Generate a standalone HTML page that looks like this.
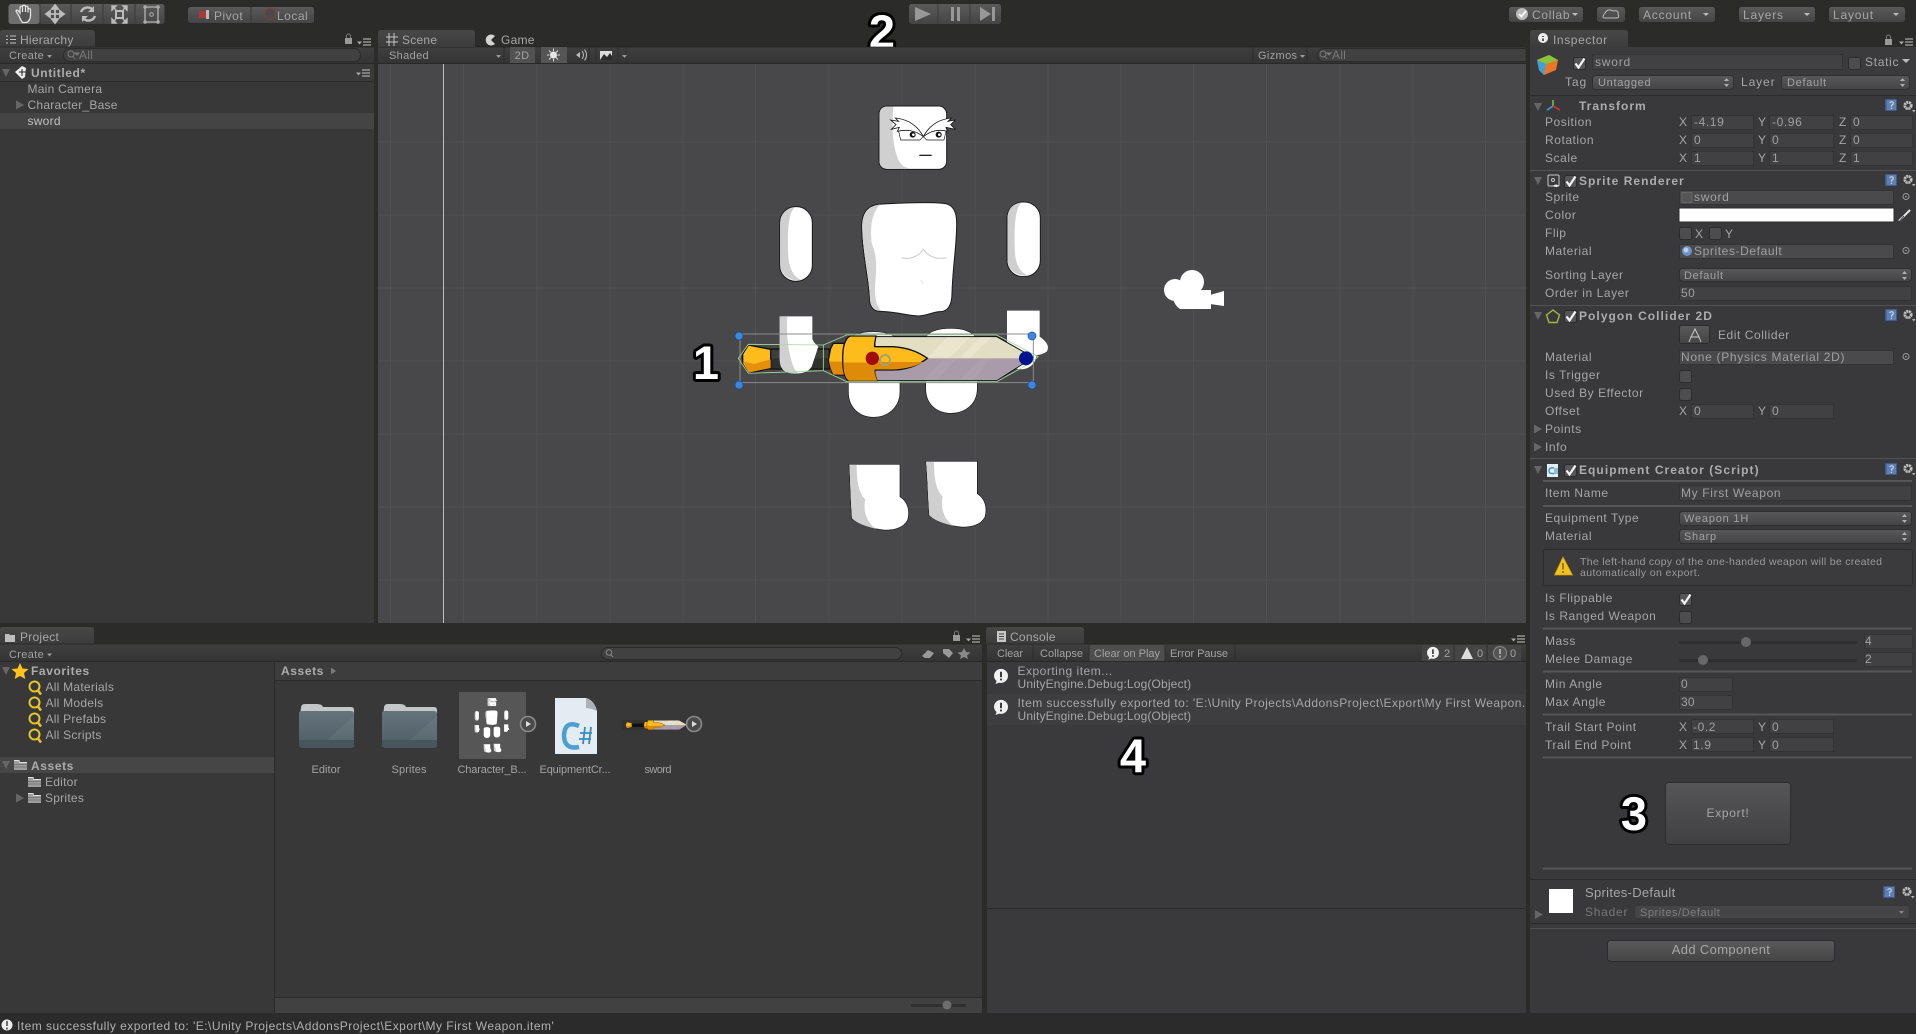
<!DOCTYPE html>
<html><head><meta charset="utf-8"><title>Unity Editor</title>
<style>
html,body{margin:0;padding:0;background:#2b2c2a;overflow:hidden;width:1916px;height:1034px}
svg{display:block;filter:blur(.35px)}
text{font-family:"Liberation Sans",sans-serif;font-size:12px;fill:#a6a6a6;letter-spacing:.25px;white-space:pre}
.b{font-weight:bold;letter-spacing:.6px;fill:#acacac}
.s{font-size:11px;letter-spacing:.35px;fill:#a2a2a2}
.v{font-size:12px;fill:#a0a0a0}
.l{fill:#c0c0c0}
.d{fill:#787878}
.n{font-size:47px;font-weight:bold;fill:#fff;stroke:#000;stroke-width:6px;paint-order:stroke;stroke-linejoin:round;letter-spacing:0;text-anchor:middle}
.m{text-anchor:middle}
.fld{fill:#414143;stroke:#333335;stroke-width:1}
.dd{fill:url(#gd);stroke:#2f2f2f;stroke-width:1}
</style></head><body>
<svg width="1916" height="1034" viewBox="0 0 1916 1034" xmlns="http://www.w3.org/2000/svg">
<defs>
<linearGradient id="gd" x1="0" y1="0" x2="0" y2="1"><stop offset="0" stop-color="#58585a"/><stop offset="1" stop-color="#444446"/></linearGradient>
<linearGradient id="gb" x1="0" y1="0" x2="0" y2="1"><stop offset="0" stop-color="#5a5a5a"/><stop offset="1" stop-color="#444"/></linearGradient>
<linearGradient id="gt" x1="0" y1="0" x2="0" y2="1"><stop offset="0" stop-color="#3f3f3f"/><stop offset="1" stop-color="#343434"/></linearGradient>
<linearGradient id="gtab" x1="0" y1="0" x2="0" y2="1"><stop offset="0" stop-color="#474747"/><stop offset="1" stop-color="#3c3c3c"/></linearGradient>
<linearGradient id="gf" x1="0" y1="0" x2="0" y2="1"><stop offset="0" stop-color="#65747c"/><stop offset="1" stop-color="#4e5d65"/></linearGradient>
<linearGradient id="gexp" x1="0" y1="0" x2="0" y2="1"><stop offset="0" stop-color="#565658"/><stop offset="1" stop-color="#404042"/></linearGradient>
<g id="cb"><rect x=".5" y=".5" width="12" height="12" rx="2" fill="#4d4d4f" stroke="#2c2c2c"/></g>
<g id="ck"><rect x=".5" y=".5" width="12" height="12" rx="2" fill="#555557" stroke="#2c2c2c"/><path d="M2.5 6.5 L5.5 10.5 L11.5 1.5" fill="none" stroke="#f4f4f4" stroke-width="2.2"/></g>
<g id="help"><rect x="0" y="0" width="12" height="12" fill="#4f6a98" stroke="#2e3a55" stroke-width=".6"/><rect x="2" y="1" width="9" height="10" fill="#5f7fb2"/><path d="M4.6 4 Q6.5 1.6 8.2 3.6 Q8.6 5.4 6.5 6.3 V7.6 M6.5 8.6 V10" fill="none" stroke="#c6d2e4" stroke-width="1.2"/></g>
<g id="gear"><circle cx="6" cy="5.5" r="3.2" fill="none" stroke="#c0c0c0" stroke-width="2.8" stroke-dasharray="2 .6"/><circle cx="6" cy="5.5" r="1.6" fill="#393939"/><path d="M10 10 H13.5 L11.8 12.5Z" fill="#b4b4b4"/></g>
<g id="ud"><path d="M0 3 L2.5 0 L5 3Z M0 6 L2.5 9 L5 6Z" fill="#b0b0b0"/></g>
<g id="menu"><path d="M0 3.5 H5 L2.5 6.5Z" fill="#a8a8a8"/><path d="M6 1 H14 M6 4 H14 M6 7 H14" stroke="#a8a8a8" stroke-width="1.2"/></g>
<g id="tri"><path d="M0 0 H8 L4 8Z" fill="#666"/></g>
<g id="trr"><path d="M0 0 L8 4.5 L0 9Z" fill="#666"/></g>
<g id="tgt"><circle cx="0" cy="0" r="3" fill="none" stroke="#999" stroke-width="1"/><circle cx="0" cy="0" r=".9" fill="#999"/></g>
<g id="info"><path d="M0 7 a7 7 0 1 1 5 6.6 L1.5 15 L2.6 12 A7 7 0 0 1 0 7Z" fill="#f2f2f2"/><path d="M7 2.8 V8.2 M7 9.6 V11.4" stroke="#333" stroke-width="1.9"/></g>
<g id="mag"><circle cx="6.5" cy="6.5" r="5" fill="none" stroke="#e8c52a" stroke-width="2"/><path d="M10 10.5 L13 14.5" stroke="#e8c52a" stroke-width="2.5"/></g>
<g id="fol"><path d="M0 3 H5 L6 1 H0Z M0 3 H13 V11 H0Z" fill="#9e9e9e"/><path d="M0 2 H5 V4 H13 V3 H6 L5 1 H0Z" fill="#ddd"/><path d="M0 5.5 H13 M0 8 H13" stroke="#6b6b6b" stroke-width=".7"/></g>
<g id="folder"><path d="M2 4 Q2 0 6 0 H18 Q23 0 24 3 L52 3 Q55 3 55 6 V11 H1Z" fill="#c4c7c8"/><path d="M0 9 Q0 7 3 7 H52 Q55 7 55 10 V41 Q55 44 51 44 H4 Q0 44 0 40Z" fill="url(#gf)"/><path d="M0 36 V40 Q0 44 4 44 H51 Q55 44 55 41 V36 Z" fill="#47555d"/><path d="M28 36 L55 12 V36Z" fill="#fff" opacity=".05"/></g>
<g id="playc"><circle cx="0" cy="0" r="7.5" fill="#4a4a4a" stroke="#8a8a8a" stroke-width="1.6"/><path d="M-2 -3 L3 0 L-2 3Z" fill="#ddd"/></g>

<g id="handle"><rect x="270" y="807" width="178" height="60" fill="#3c3f3a" stroke="#111" stroke-width="4"/><rect x="272" y="835" width="175" height="30" fill="#2f312e"/></g>
<g id="front">
<path d="M205 795 L272 808 V865 L205 880 L188 852 V822Z" fill="#fdbb1c" stroke="#111" stroke-width="4"/>
<path d="M190 845 L222 852 L272 838 V864 L205 878Z" fill="#e48f0e"/>
<path d="M452 805 L460 790 H492 V885 H460 L452 865 L445 840Z" fill="#fdbb1c" stroke="#111" stroke-width="4"/>
<path d="M447 845 H492 V884 H460 L452 865Z" fill="#e08a0a"/>
<path d="M585 770 H950 L1060 832 L950 902 H585Z" fill="#e2dec4" stroke="#111" stroke-width="3"/>
<path d="M587 835 H1052 L950 900 H587Z" fill="#a99ba9"/>
<path d="M800 772 H870 L810 833 H745Z M900 772 H935 L870 833 H840Z" fill="#e9e6cd"/>
<path d="M730 900 L790 837 H830 L770 900Z M840 900 L900 837 H930 L880 900Z" fill="#ae9fae"/>
<path d="M510 768 H588 Q582 800 584 800 H640 Q700 804 742 835 Q700 868 640 870 H584 Q582 880 592 904 H506 Q488 890 488 835 Q488 780 510 768Z" fill="#fdbb1c" stroke="#111" stroke-width="4"/>
<path d="M490 848 H584 V870 Q582 880 592 902 H506 Q490 890 490 848Z M584 846 H730 Q695 866 640 868 H584Z" fill="#e08a0a"/>
</g>
<g id="char" stroke="#1a1a1a" stroke-width="3">
<rect x="597" y="78" width="203" height="190" rx="24" fill="#fff"/>
<path d="M622 80 H640 C636 120 636 190 650 225 C656 250 670 262 690 266 H622 Q599 266 599 243 V103 Q599 80 622 80Z" fill="#d0d0d0" stroke="none"/>
<path d="M632 120 L656 124 L646 114 C685 118 712 136 730 170 C705 150 680 148 652 154 L658 142 L634 148 L648 134Z" fill="#fff" stroke-width="2.5"/>
<path d="M826 120 L804 124 L814 114 C775 118 748 136 730 170 C755 150 780 148 802 154 L798 142 L826 148 L812 134Z" fill="#fff" stroke-width="2.5"/>
<path d="M656 154 L662 180 H720 L730 170 L740 180 H792 L798 154" fill="none" stroke-width="2"/>
<circle cx="698" cy="164" r="9" fill="#111" stroke="none"/><circle cx="776" cy="164" r="9" fill="#111" stroke="none"/>
<circle cx="700" cy="164" r="4" fill="#fff" stroke="none"/><circle cx="778" cy="164" r="4" fill="#fff" stroke="none"/>
<path d="M718 226 H755" stroke="#222" stroke-width="4"/>
<path d="M545 440 C545 390 570 372 610 372 C680 368 750 366 790 370 C820 372 830 395 830 430 C830 500 818 560 816 640 C816 680 800 695 780 695 C760 695 740 708 715 708 C680 706 640 694 600 694 C580 694 568 680 568 650 C565 590 545 510 545 440Z" fill="#fff"/>
<path d="M547 440 C547 402 565 378 600 374 C575 400 570 440 575 490 C592 530 590 560 585 620 C585 660 590 685 606 692 H600 C582 692 570 680 570 650 C567 590 547 510 547 440Z" fill="#d2d2d2" stroke="none"/>
<path d="M665 533 C690 540 715 530 730 508 C745 530 770 540 800 533" fill="none" stroke="#ccc" stroke-width="3"/>
<path d="M722 600 L730 612" stroke="#ccc" stroke-width="2"/>
<rect x="299" y="380" width="98" height="224" rx="48" fill="#fff"/>
<path d="M345 382 C322 395 322 480 325 530 C328 570 345 595 365 600 C340 606 301 590 301 555 V430 C301 400 320 384 345 382Z" fill="#cfcfcf" stroke="none"/>
<rect x="981" y="366" width="100" height="224" rx="48" fill="#fff"/>
<path d="M1025 368 C1000 385 1003 480 1005 520 C1008 560 1025 580 1045 586 C1020 592 983 575 983 540 V415 C983 385 1000 370 1025 368Z" fill="#cfcfcf" stroke="none"/>
<path d="M299 709 H397 V775 C400 790 412 795 415 800 L395 860 C385 880 350 884 325 878 C300 870 299 850 299 830Z" fill="#fff" stroke="none"/>
<path d="M300 709 H322 C318 760 325 830 345 870 L355 880 C340 882 330 880 325 878 C300 870 300 850 300 830Z" fill="#d0d0d0" stroke="none"/>
<path d="M981 692 H1079 V770 C1100 785 1110 800 1100 815 C1085 825 1075 825 1070 825 C1065 860 1040 868 1020 868 L981 860Z" fill="#fff" stroke="none"/>
<path id="th" d="M505 790 C505 765 540 755 582 755 C625 755 660 770 660 800 V935 C660 985 620 1012 582 1012 C540 1012 505 985 505 935Z" fill="#fff" stroke-width="2"/>
<path d="M737 780 C737 755 772 745 814 745 C857 745 892 760 892 790 V925 C892 975 852 1000 814 1000 C772 1000 737 975 737 925Z" fill="#fff" stroke-width="2"/>
<path d="M507 1153 H660 V1250 C685 1265 690 1295 683 1320 C670 1345 640 1352 610 1350 C570 1345 530 1330 515 1315 C510 1250 510 1200 507 1153Z" fill="#fff" stroke-width="2"/>
<path d="M508 1154 H530 C530 1200 535 1240 556 1258 C548 1290 560 1330 590 1347 C560 1340 530 1330 516 1315 C511 1250 511 1200 508 1154Z" fill="#cfcfcf" stroke="none"/>
<path d="M737 1144 H892 V1241 C917 1256 922 1286 915 1311 C902 1336 872 1343 842 1341 C802 1336 762 1321 747 1306 C742 1241 742 1191 737 1144Z" fill="#fff" stroke-width="2"/>
<path d="M738 1145 H762 C762 1191 767 1231 788 1249 C780 1281 792 1321 822 1338 C792 1331 762 1321 748 1306 C743 1241 743 1191 738 1145Z" fill="#cfcfcf" stroke="none"/>
</g>
</defs>

<!-- background -->
<rect width="1916" height="1034" fill="#2b2c2a"/>

<!-- top toolbar: tools -->
<rect x="8" y="3.5" width="157" height="21" rx="3" fill="url(#gb)" stroke="#2a2a2a"/>
<rect x="8.500" y="4" width="31" height="20" rx="3" fill="#6e6e6e"/>
<path d="M40 4 V24 M71 4 V24 M103 4 V24 M135 4 V24" stroke="#383838"/>
<path d="M19 16 L16 11 Q16.5 9.5 18 10.5 L20 13 V7 Q21.5 5.5 22.5 7 V12 V6 Q24 4.5 25.5 6 V12 V7 Q27 5.5 28 7 V12.5 V9 Q29.5 8 30.5 9.5 V16 Q30 21 26.5 22.5 H22.5 Q20.5 20 19 16Z" fill="#555" stroke="#e4e4e4" stroke-width="1.300"/>
<path d="M55 6 V22 M47 14 H63 M55 5 L52 9 H58Z M55 23 L52 19 H58Z M46 14 L50 11 V17Z M64 14 L60 11 V17Z" fill="#bcbcbc" stroke="#bcbcbc" stroke-width="1.800"/>
<path d="M81 12 A7 7 0 0 1 93 10 M95 16 A7 7 0 0 1 83 18" fill="none" stroke="#bcbcbc" stroke-width="2.400"/><path d="M94 6 V12 H88Z M82 22 V16 H88Z" fill="#bcbcbc"/>
<rect x="116" y="11" width="7" height="7" fill="none" stroke="#bcbcbc" stroke-width="2"/><path d="M112 10 V6 H116 Z M127 10 V6 H123Z M112 19 V23 H116Z M127 19 V23 H123Z M112 6 L116 10 M127 6 L123 10 M112 23 L116 19 M127 23 L123 19" fill="#bcbcbc" stroke="#bcbcbc" stroke-width="1.400"/>
<rect x="145" y="7" width="13" height="15" fill="none" stroke="#acacac" stroke-width="1.400"/><circle cx="151.500" cy="14.500" r="1.800" fill="none" stroke="#acacac"/><path d="M145 7h.1M158 7h.1M145 22h.1M158 22h.1" stroke="#acacac" stroke-width="3.400" stroke-linecap="round"/>
<!-- pivot local -->
<rect x="187.500" y="6.500" width="127" height="17" rx="3" fill="url(#gb)" stroke="#2a2a2a"/>
<path d="M251 7 V23" stroke="#383838"/>
<rect x="199" y="11" width="7" height="7" fill="#a83a3a"/><rect x="206" y="10" width="3" height="9" fill="#bcbcbc"/>
<path d="M265 10 L270 8 L275 10 V17 L270 20 L265 17Z" fill="#4a4a4a" stroke="#8a3a3a" stroke-width="1"/>
<text x="214" y="20" style="font-size:12px;letter-spacing:.5px">Pivot</text>
<text x="277" y="20" style="font-size:12px;letter-spacing:.5px">Local</text>
<!-- play -->
<rect x="908.500" y="3.500" width="93" height="21" rx="3" fill="url(#gb)" stroke="#2a2a2a"/>
<path d="M938 4 V24 M970 4 V24" stroke="#3a3a3a"/>
<path d="M915 7 L931 14 L915 21Z M951 7 H954 V21 H951Z M957 7 H960 V21 H957Z M980 7 L991 14 L980 21Z M992 7 H995 V21 H992Z" fill="#989898"/>
<text class="n" x="882" y="48">2</text>
<!-- right buttons -->
<rect x="1508.500" y="6.500" width="75" height="16" rx="3" fill="url(#gb)" stroke="#2a2a2a"/>
<circle cx="1522" cy="14" r="6" fill="#bbb"/><path d="M1519 14 L1521.500 16.500 L1526 11" fill="none" stroke="#fff" stroke-width="1.800"/>
<text x="1532" y="19" style="letter-spacing:.7px">Collab</text><path d="M1572 13 H1578 L1575 16Z" fill="#bbb"/>
<rect x="1596.500" y="6.500" width="29" height="16" rx="3" fill="url(#gb)" stroke="#2a2a2a"/>
<path d="M1605 18 Q1601 18 1605 13 Q1608 8 1613 11 Q1619 10 1618 14 Q1620 18 1616 18Z" fill="none" stroke="#bbb"/>
<rect x="1638.500" y="6.500" width="77" height="16" rx="3" fill="url(#gb)" stroke="#2a2a2a"/>
<text x="1643" y="19" style="letter-spacing:.8px">Account</text><path d="M1703 13 H1709 L1706 16Z" fill="#bbb"/>
<rect x="1738.500" y="6.500" width="77" height="16" rx="3" fill="url(#gb)" stroke="#2a2a2a"/>
<text x="1743" y="19" style="letter-spacing:.8px">Layers</text><path d="M1804 13 H1810 L1807 16Z" fill="#bbb"/>
<rect x="1828.500" y="6.500" width="77" height="16" rx="3" fill="url(#gb)" stroke="#2a2a2a"/>
<text x="1833" y="19" style="letter-spacing:.8px">Layout</text><path d="M1893 13 H1899 L1896 16Z" fill="#bbb"/>

<!-- HIERARCHY -->
<path d="M0 47 V33 Q0 30 3 30 H92 Q95 30 95 33 V47Z" fill="url(#gtab)"/>
<path d="M6 36 H8 M6 39.500 H8 M6 43 H8 M10 36 H16 M10 39.500 H16 M10 43 H16" stroke="#c0c0c0"/>
<text x="20" y="44">Hierarchy</text>
<rect x="345" y="38" width="7" height="6" fill="#999"/><path d="M346.500 38 V36 A2 2 0 0 1 350.500 36 V38" fill="none" stroke="#777"/>
<use href="#menu" x="357" y="38"/>
<rect x="0" y="47" width="374" height="576" fill="#383838"/>
<rect x="0" y="47" width="374" height="16" fill="url(#gt)"/>
<path d="M0 47 H374" stroke="#222" opacity=".7"/><path d="M0 63.500 H374" stroke="#292929"/>
<text class="s" x="9" y="59">Create</text><path d="M47 55 H52 L49.500 58Z" fill="#999"/>
<rect x="63.500" y="48.500" width="297" height="13" rx="6.500" fill="#414141" stroke="#2b2b2b"/>
<circle cx="71" cy="54" r="3" fill="none" stroke="#7a7a7a"/><path d="M73 56.500 L75 59 M75 53 H79 L77 55Z" stroke="#7a7a7a" fill="#7a7a7a"/>
<text class="d" x="79" y="59">All</text>
<rect x="0" y="64" width="374" height="17.500" fill="#3a3a3a"/>
<path d="M0 81.500 H374" stroke="#2a2a2a"/>
<use href="#tri" x="2" y="69"/>
<path d="M15 72 L22 66 L26 68 L25 77 L22 79 Z" fill="#eee"/><path d="M19 72 H26 M22 69 V76" stroke="#222"/>
<text class="b" x="31" y="77">Untitled*</text>
<use href="#menu" x="356" y="69"/>
<rect x="0" y="113" width="374" height="16" fill="#444"/>
<text x="27.500" y="93">Main Camera</text>
<use href="#trr" x="16" y="100.500"/>
<text x="27.500" y="109">Character_Base</text>
<text class="l" x="27.500" y="125">sword</text>

<!-- SCENE -->
<rect x="378" y="47" width="1148" height="16" fill="url(#gt)"/>
<path d="M378 47 H1526" stroke="#222" opacity=".7"/><path d="M378 63.500 H1526" stroke="#292929"/>
<path d="M378 47 V33 Q378 30 381 30 H472 Q475 30 475 33 V47Z" fill="url(#gtab)"/>
<path d="M389 33 V46 M394 33 V46 M386 37 H398 M386 42 H398" stroke="#c8c8c8"/>
<text x="402" y="44">Scene</text>
<path d="M495 36 A5.500 5.500 0 1 0 495 44 L491 40Z" fill="#d4d4d4"/>
<text x="501" y="44">Game</text>
<text class="s" x="389" y="59">Shaded</text><path d="M496 55 H501 L498.500 58Z" fill="#999"/>
<path d="M504 47 V63" stroke="#2c2c2c"/>
<rect x="510" y="47" width="25" height="16" fill="#525252"/><text class="s" x="522" y="59" style="text-anchor:middle">2D</text>
<rect x="541" y="47" width="26" height="16" fill="#555"/>
<circle cx="553.500" cy="55" r="3.500" fill="#e8e8e8"/><path d="M553.500 48.500 V51 M553.500 59 V61.500 M547 55 H549.500 M557.500 55 H560 M549 50.500 L551 52.500 M556 57.500 L558 59.500 M558 50.500 L556 52.500 M551 57.500 L549 59.500" stroke="#ddd"/>
<path d="M574 55 H576 L580 52 V58 L576 55Z" fill="#bbb"/><path d="M582 51 Q585 55 582 59 M584.500 49.500 Q588.500 55 584.500 60.500" fill="none" stroke="#bbb"/>
<path d="M589 47 V63 M596 47 V63 M618 47 V63 M626 47 V63" stroke="#2d2d2d"/>
<rect x="600" y="51" width="12" height="9" fill="#dcdcdc"/><path d="M600 60 L604 54 L607 57 L610 53 L612 56 V60Z" fill="#2d2d2d"/>
<path d="M622 55 H627 L624.500 58Z" fill="#999"/>
<path d="M1253 47 V63 M1307 47 V63" stroke="#2a2a2a"/>
<text class="s" x="1258" y="59">Gizmos</text><path d="M1300 55 H1305 L1302.500 58Z" fill="#999"/>
<path d="M1324 48.500 H1526 V61.500 H1324 A6.500 6.500 0 0 1 1324 48.500Z" fill="#414141" stroke="#2b2b2b"/>
<circle cx="1323" cy="54" r="3" fill="none" stroke="#7a7a7a"/><path d="M1325 56.500 L1327 59 M1327 53 H1331 L1329 55Z" stroke="#7a7a7a" fill="#7a7a7a"/>
<text class="d" x="1332" y="59">All</text>

<rect x="378" y="64" width="1148" height="559" fill="#484749"/>
<g stroke="#515152" stroke-width="1">
<path d="M390.500 64 V623 M463.500 64 V623 M537 64 V623 M610 64 V623 M683 64 V623 M755.500 64 V623 M829 64 V623 M902 64 V623 M975 64 V623 M1048 64 V623 M1121 64 V623 M1193.500 64 V623 M1266.500 64 V623 M1340 64 V623 M1413 64 V623 M1485.500 64 V623"/>
<path d="M378 142 H1526 M378 215 H1526 M378 288 H1526 M378 361 H1526 M378 434 H1526 M378 507 H1526 M378 580 H1526"/>
</g>
<path d="M443.500 64 V623" stroke="#bdbdbd"/>

<g transform="translate(680 80) scale(.33333)">
<use href="#handle"/>
<use href="#char"/>
<use href="#front"/>
<path d="M180 762 H1060 V908 H180Z" fill="none" stroke="#8c8c8c" stroke-width="3"/>
<path d="M175 835 L205 793 L430 795 L500 765 L950 765 L1075 830 L1050 850 L950 905 L500 905 L430 872 L205 880Z M430 795 V872" fill="none" stroke="#a0dca0" stroke-width="2.500"/>
<circle cx="577" cy="835" r="20" fill="#a30b0b"/>
<circle cx="615" cy="840" r="15" fill="none" stroke="#a3a26a" stroke-width="6"/>
<circle cx="1038" cy="835" r="21" fill="#00128f"/>
<circle cx="177" cy="768" r="12" fill="#3c88e0" stroke="#1c4a90" stroke-width="2"/>
<circle cx="1056" cy="768" r="12" fill="#3c88e0" stroke="#1c4a90" stroke-width="2"/>
<circle cx="177" cy="915" r="12" fill="#3c88e0" stroke="#1c4a90" stroke-width="2"/>
<circle cx="1056" cy="915" r="12" fill="#3c88e0" stroke="#1c4a90" stroke-width="2"/>
</g>
<text class="n" x="706" y="379">1</text>
<!-- camera gizmo -->
<g fill="#fff"><circle cx="1175" cy="290" r="11"/><circle cx="1192" cy="282" r="12"/><path d="M1172 290 H1211 V309 H1180 Q1172 304 1172 290Z"/><path d="M1210 295 L1224 291 V306 L1210 304Z"/></g>

<!-- PROJECT -->
<path d="M0 644 V630 Q0 627 3 627 H91 Q94 627 94 630 V644Z" fill="url(#gtab)"/>
<path d="M5 634 H9 L10 635 H15 V642 H5Z" fill="#bdbdbd"/>
<text x="20" y="641">Project</text>
<rect x="953" y="635" width="7" height="6" fill="#999"/><path d="M954.500 635 V633 A2 2 0 0 1 958.500 633 V635" fill="none" stroke="#777"/>
<use href="#menu" x="966" y="635"/>
<rect x="0" y="644" width="982" height="369" fill="#383838"/>
<rect x="0" y="644" width="982" height="17" fill="url(#gt)"/>
<path d="M0 644 H982" stroke="#222" opacity=".7"/><path d="M0 661.500 H982" stroke="#292929"/>
<text class="s" x="9" y="658">Create</text><path d="M47 653.500 H52 L49.500 656.500Z" fill="#999"/>
<rect x="601.500" y="647.500" width="300" height="12" rx="6" fill="#414141" stroke="#2b2b2b"/>
<circle cx="609" cy="652.500" r="2.800" fill="none" stroke="#888"/><path d="M611 655 L613 657" stroke="#888"/>
<path d="M922 656 L928 650 L934 653 L930 658 L925 658Z" fill="#999"/>
<path d="M943 649 H949 L953 653 L949 658 L943 653Z" fill="#999"/>
<path d="M964 648 L966 652 L970.500 652.500 L967 655.500 L968 659 L964 657 L960 659 L961 655.500 L957.500 652.500 L962 652Z" fill="#8a8a8a"/>
<path d="M274.500 661 V1013" stroke="#2a2a2a"/>
<rect x="275" y="662" width="707" height="18" fill="#3d3d3d"/><path d="M275 680.500 H982" stroke="#2c2c2c"/>
<text class="b" x="281" y="675">Assets</text>
<path d="M331 667.500 L336 671 L331 674.500Z" fill="#777"/>
<use href="#tri" x="2" y="667"/>
<path d="M21 663 L23.500 668.500 L29.500 669 L25 673 L26.300 679 L21 676 L15.700 679 L17 673 L12.500 669 L18.500 668.500Z" fill="#fcc21e" transform="translate(-1 0)"/>
<text class="b" x="31" y="675">Favorites</text>
<use href="#mag" x="28" y="680"/><text x="45.500" y="691">All Materials</text>
<use href="#mag" x="28" y="696"/><text x="45.500" y="707">All Models</text>
<use href="#mag" x="28" y="712"/><text x="45.500" y="723">All Prefabs</text>
<use href="#mag" x="28" y="728"/><text x="45.500" y="739">All Scripts</text>
<rect x="0" y="757" width="274" height="16" fill="#464646"/>
<use href="#tri" x="2" y="761"/>
<use href="#fol" x="14" y="759"/>
<text class="b" x="31" y="770">Assets</text>
<use href="#fol" x="28" y="776"/><text x="45" y="786">Editor</text>
<use href="#trr" x="16" y="793.500"/>
<use href="#fol" x="28" y="792"/><text x="45" y="802">Sprites</text>

<use href="#folder" x="299" y="704"/>
<use href="#folder" x="382" y="704"/>
<rect x="459" y="692" width="67" height="67" fill="#565656"/>
<g transform="translate(461.900 694.600) scale(.043)"><use href="#char" style="stroke-width:0"/></g>
<use href="#playc" x="528" y="724"/>
<path d="M555 698 H586 Q594 700 597 711 V754 H555Z" fill="#e2ecf2"/>
<path d="M586 698 Q594 700 597 711 Q590 708 586 708Z" fill="#aab2b8"/>
<path d="M579 726 Q565 720 564 735 Q564 750 579 747" fill="none" stroke="#4ba0cf" stroke-width="4.500"/>
<path d="M585 727 L583 744 M591 727 L589 744 M580 733 H592 M579 739 H591" stroke="#3a8bbd" stroke-width="1.800"/>
<rect x="622" y="720" width="70" height="10" fill="#2e2e2e" opacity=".6"/>
<rect x="630" y="723.500" width="20" height="3.500" fill="#111"/>
<g transform="translate(612.700 666.500) scale(.07)"><use href="#front"/></g>
<use href="#playc" x="694" y="724"/>
<text class="s m" x="326" y="773" textLength="29" lengthAdjust="spacing" style="letter-spacing:0">Editor</text>
<text class="s m" x="409" y="773" textLength="35" lengthAdjust="spacing" style="letter-spacing:0">Sprites</text>
<text class="s m" x="492" y="773" textLength="69" lengthAdjust="spacing" style="letter-spacing:0">Character_B...</text>
<text class="s m" x="575" y="773" textLength="71" lengthAdjust="spacing" style="letter-spacing:0">EquipmentCr...</text>
<text class="s m" x="658" y="773" textLength="27" lengthAdjust="spacing" style="letter-spacing:0">sword</text>
<rect x="275" y="998" width="707" height="15" fill="#414141"/><path d="M275 997.500 H982" stroke="#2a2a2a"/>
<rect x="911" y="1004" width="55" height="3" rx="1.500" fill="#2f2f2f"/><circle cx="947" cy="1005" r="4.500" fill="#6d6d6d"/>

<!-- CONSOLE -->
<path d="M986 644 V630 Q986 627 989 627 H1081 Q1084 627 1084 630 V644Z" fill="url(#gtab)"/>
<rect x="997" y="631" width="9" height="11" fill="#c8c8c8"/><path d="M999 634 H1004 M999 636.500 H1004 M999 639 H1004" stroke="#444"/>
<text x="1010" y="641">Console</text>
<use href="#menu" x="1511" y="635"/>
<rect x="987" y="644" width="539" height="369" fill="#3a3a3c"/>
<rect x="987" y="644" width="539" height="17" fill="url(#gt)"/>
<path d="M987 644 H1526" stroke="#222" opacity=".7"/><path d="M987 661.500 H1526" stroke="#292929"/>
<rect x="1089" y="645" width="76" height="16" fill="#4e4e4e"/>
<path d="M1033 645 V661 M1089 645 V661 M1165 645 V661 M1235 645 V661" stroke="#2d2d2d"/>
<text class="s" x="997" y="657" textLength="26" lengthAdjust="spacing" style="letter-spacing:0">Clear</text>
<text class="s" x="1040" y="657" textLength="43" lengthAdjust="spacing" style="letter-spacing:0">Collapse</text>
<text class="s" x="1094" y="657" textLength="66" lengthAdjust="spacing" style="letter-spacing:0">Clear on Play</text>
<text class="s" x="1170" y="657" textLength="58" lengthAdjust="spacing" style="letter-spacing:0">Error Pause</text>
<rect x="1422" y="645" width="99" height="16" fill="#454545"/>
<path d="M1454 645 V661 M1487 645 V661" stroke="#2e2e2e"/>
<g transform="translate(1427 647) scale(.85)"><use href="#info"/></g><text class="s" x="1444" y="657">2</text>
<path d="M1461 659 L1467 647 L1473 659Z" fill="#dcdcdc"/><text class="s" x="1477" y="657">0</text>
<circle cx="1500" cy="653" r="6.500" fill="#555" stroke="#888"/><path d="M1500 649 V654 M1500 655.500 V657.500" stroke="#bbb" stroke-width="1.600"/><text class="s" x="1510" y="657">0</text>
<use href="#info" x="994" y="669"/>
<text x="1017.500" y="675" style="letter-spacing:.5px">Exporting item...</text>
<text x="1017.500" y="688" style="letter-spacing:.15px">UnityEngine.Debug:Log(Object)</text>
<rect x="987" y="694" width="539" height="31" fill="#3e3e40"/>
<use href="#info" x="994" y="700"/>
<text x="1017.500" y="707" textLength="508" lengthAdjust="spacing">Item successfully exported to: 'E:\Unity Projects\AddonsProject\Export\My First Weapon.</text>
<text x="1017.500" y="720" style="letter-spacing:.15px">UnityEngine.Debug:Log(Object)</text>
<path d="M987 908.500 H1526" stroke="#2a2a2a"/>
<text class="n" x="1133" y="772">4</text>

<!-- INSPECTOR -->
<path d="M1530 47 V33 Q1530 30 1533 30 H1625 Q1628 30 1628 33 V47Z" fill="url(#gtab)"/>
<circle cx="1543" cy="38" r="5" fill="#eee"/><path d="M1543 36 V37 M1543 38.500 V41" stroke="#222" stroke-width="1.500"/>
<text x="1553" y="44" style="letter-spacing:.6px">Inspector</text>
<rect x="1885" y="39" width="7" height="6" fill="#999"/><path d="M1886.500 39 V37 A2 2 0 0 1 1890.500 37 V39" fill="none" stroke="#777"/>
<use href="#menu" x="1899" y="38"/>
<rect x="1530" y="47" width="386" height="966" fill="#39393b"/>
<rect x="1530" y="47" width="386" height="48" fill="#3b3b3d"/>
<path d="M1537 60 L1549 55 L1558 60 L1556 70 L1544 75 L1539 70Z" fill="#e8772a"/><path d="M1537 60 L1549 55 L1558 60 L1546 64Z" fill="#8ac43a"/><path d="M1537 60 L1546 64 L1544 75 L1539 70Z" fill="#3fa0d8"/>
<use href="#ck" x="1573" y="57"/>
<rect class="fld" x="1592.500" y="54.500" width="250" height="15"/>
<text class="v" x="1595" y="66" style="letter-spacing:.8px">sword</text>
<use href="#cb" x="1848" y="57"/>
<text x="1865" y="66" style="letter-spacing:.7px">Static</text>
<path d="M1902 59 H1910 L1906 63Z" fill="#bbb"/>
<text x="1565" y="86" style="letter-spacing:.9px">Tag</text>
<rect class="dd" x="1592.500" y="75.500" width="141" height="14" rx="3"/><text class="s" x="1598" y="86" style="letter-spacing:.7px">Untagged</text><use href="#ud" x="1724" y="78"/>
<text x="1741" y="86" style="letter-spacing:.9px">Layer</text>
<rect class="dd" x="1781.500" y="75.500" width="128" height="14" rx="3"/><text class="s" x="1787" y="86" style="letter-spacing:.7px">Default</text><use href="#ud" x="1900" y="78"/>
<path d="M1530 95.500 H1916" stroke="#2c2c2e"/>

<!-- Transform -->
<use href="#tri" x="1534" y="103"/>
<path d="M1553 100 V106" stroke="#7dbf3a" stroke-width="1.600"/><path d="M1553 106 L1547 110" stroke="#3a8fd8" stroke-width="1.800"/><path d="M1553 106 L1560 110" stroke="#c8342c" stroke-width="1.800"/>
<text class="b" x="1579" y="110" style="letter-spacing:1px">Transform</text>
<use href="#help" x="1885" y="99"/><use href="#gear" x="1902" y="100"/>
<text x="1545" y="126" style="letter-spacing:.55px">Position</text>
<text x="1545" y="144" style="letter-spacing:.55px">Rotation</text>
<text x="1545" y="162" style="letter-spacing:.55px">Scale</text>
<g>
<rect class="fld" x="1691.500" y="115.500" width="62" height="14"/><rect class="fld" x="1769.500" y="115.500" width="64" height="14"/><rect class="fld" x="1850.500" y="115.500" width="62" height="14"/>
<rect class="fld" x="1691.500" y="133.500" width="62" height="14"/><rect class="fld" x="1769.500" y="133.500" width="64" height="14"/><rect class="fld" x="1850.500" y="133.500" width="62" height="14"/>
<rect class="fld" x="1691.500" y="151.500" width="62" height="14"/><rect class="fld" x="1769.500" y="151.500" width="64" height="14"/><rect class="fld" x="1850.500" y="151.500" width="62" height="14"/>
</g>
<text x="1679" y="126">X</text><text class="v" x="1694" y="126" style="letter-spacing:.6px">-4.19</text>
<text x="1758" y="126">Y</text><text class="v" x="1772" y="126" style="letter-spacing:.6px">-0.96</text>
<text x="1839" y="126">Z</text><text class="v" x="1853" y="126">0</text>
<text x="1679" y="144">X</text><text class="v" x="1694" y="144">0</text>
<text x="1758" y="144">Y</text><text class="v" x="1772" y="144">0</text>
<text x="1839" y="144">Z</text><text class="v" x="1853" y="144">0</text>
<text x="1679" y="162">X</text><text class="v" x="1694" y="162">1</text>
<text x="1758" y="162">Y</text><text class="v" x="1772" y="162">1</text>
<text x="1839" y="162">Z</text><text class="v" x="1853" y="162">1</text>
<path d="M1530 170.500 H1916" stroke="#525254"/>

<!-- Sprite Renderer -->
<use href="#tri" x="1534" y="177"/>
<rect x="1548" y="175" width="11" height="11" rx="1" fill="none" stroke="#c8c8c8"/><circle cx="1553" cy="180" r="1.500" fill="none" stroke="#c8c8c8"/><path d="M1553 186 Q1556 183 1559 186 Q1556 188 1553 186Z" fill="#eee"/>
<use href="#ck" x="1564" y="175"/>
<text class="b" x="1579" y="185" style="letter-spacing:1.050px">Sprite Renderer</text>
<use href="#help" x="1885" y="174"/><use href="#gear" x="1902" y="174"/>
<text x="1545" y="201" style="letter-spacing:.55px">Sprite</text>
<rect x="1679.500" y="190.500" width="214" height="14" fill="#4a4a4c" stroke="#333335"/>
<rect x="1682" y="192.500" width="10" height="10" fill="#555" stroke="#666"/>
<text class="v" x="1694" y="201" style="letter-spacing:.7px">sword</text>
<use href="#tgt" x="1906" y="196.500"/>
<text x="1545" y="219" style="letter-spacing:.55px">Color</text>
<rect x="1679" y="208" width="215" height="14" fill="#fff" stroke="#2c2c2c"/>
<path d="M1899 221 L1910 210" stroke="#e8e8e8" stroke-width="2"/><path d="M1899 222 L1904 216" stroke="#222" stroke-width=".8"/>
<text x="1545" y="237" style="letter-spacing:.55px">Flip</text>
<use href="#cb" x="1679" y="227"/><text x="1695" y="238">X</text>
<use href="#cb" x="1709" y="227"/><text x="1725" y="238">Y</text>
<text x="1545" y="255" style="letter-spacing:.55px">Material</text>
<rect x="1679.500" y="244.500" width="214" height="14" fill="#4a4a4c" stroke="#333335"/>
<circle cx="1687" cy="251" r="5" fill="#6d93c8"/><circle cx="1686" cy="250" r="2.500" fill="#b8cee8"/>
<text class="v" x="1694" y="255" style="letter-spacing:.6px">Sprites-Default</text>
<use href="#tgt" x="1906" y="250.500"/>
<text x="1545" y="279" style="letter-spacing:.55px">Sorting Layer</text>
<rect class="dd" x="1679.500" y="268.500" width="232" height="13" rx="3"/><text class="s" x="1684" y="279" style="letter-spacing:.7px">Default</text><use href="#ud" x="1902" y="271"/>
<text x="1545" y="297" style="letter-spacing:.55px">Order in Layer</text>
<rect class="fld" x="1679.500" y="286.500" width="232" height="14"/><text class="v" x="1681" y="297" style="letter-spacing:.4px">50</text>
<path d="M1530 305.500 H1916" stroke="#525254"/>

<!-- Polygon collider -->
<use href="#tri" x="1534" y="312"/>
<path d="M1553 310 L1559.500 315 L1557 322.500 H1549 L1546.500 315Z" fill="none" stroke="#a4b83a" stroke-width="1.400"/>
<use href="#ck" x="1564" y="310"/>
<text class="b" x="1579" y="320" style="letter-spacing:1.050px">Polygon Collider 2D</text>
<use href="#help" x="1885" y="309"/><use href="#gear" x="1902" y="309"/>
<rect x="1679.500" y="325.500" width="30" height="18" rx="2" fill="url(#gb)" stroke="#2c2c2c"/>
<path d="M1695 329 L1699 337 H1691Z M1691 337 L1689 342 M1699 337 L1701 342" fill="none" stroke="#ccc"/>
<text x="1718" y="339" style="letter-spacing:.55px">Edit Collider</text>
<text x="1545" y="361" style="letter-spacing:.55px">Material</text>
<rect x="1679.500" y="350.500" width="214" height="14" fill="#4a4a4c" stroke="#333335"/>
<text class="v" x="1681" y="361" style="letter-spacing:.7px">None (Physics Material 2D)</text>
<use href="#tgt" x="1906" y="356.500"/>
<text x="1545" y="379" style="letter-spacing:.55px">Is Trigger</text><use href="#cb" x="1679" y="370"/>
<text x="1545" y="397" style="letter-spacing:.55px">Used By Effector</text><use href="#cb" x="1679" y="388"/>
<text x="1545" y="415" style="letter-spacing:.55px">Offset</text>
<text x="1679" y="415">X</text><rect class="fld" x="1691.500" y="404.500" width="62" height="14"/><text class="v" x="1694" y="415">0</text>
<text x="1758" y="415">Y</text><rect class="fld" x="1769.500" y="404.500" width="64" height="14"/><text class="v" x="1772" y="415">0</text>
<use href="#trr" x="1534" y="424.500"/><text x="1545" y="433" style="letter-spacing:.55px">Points</text>
<use href="#trr" x="1534" y="442.500"/><text x="1545" y="451" style="letter-spacing:.55px">Info</text>
<path d="M1530 458.500 H1916" stroke="#525254"/>

<!-- Equipment Creator -->
<use href="#tri" x="1534" y="466"/>
<rect x="1547" y="464" width="11" height="13" fill="#e4eef5"/><path d="M1554 468 Q1549 467 1549 471 Q1549 474 1554 473.500" fill="none" stroke="#3a90c8" stroke-width="1.400"/><path d="M1555 468 V474 M1557 468 V474" stroke="#3a90c8"/>
<use href="#ck" x="1564" y="464"/>
<text class="b" x="1579" y="474" style="letter-spacing:1.050px">Equipment Creator (Script)</text>
<use href="#help" x="1885" y="463"/><use href="#gear" x="1902" y="463"/>
<g stroke="#565658" stroke-width="2"><path d="M1543 481 H1912 M1543 506 H1912 M1543 628.500 H1912 M1543 671.500 H1912 M1543 714.500 H1912 M1543 757.500 H1912 M1543 868.500 H1912"/></g>
<text x="1545" y="497" style="letter-spacing:.55px">Item Name</text>
<rect class="fld" x="1679.500" y="485.500" width="232" height="15"/><text class="v" x="1681" y="497" style="letter-spacing:.65px">My First Weapon</text>
<text x="1545" y="522" style="letter-spacing:.55px">Equipment Type</text>
<rect class="dd" x="1679.500" y="511.500" width="232" height="14" rx="3"/><text class="s" x="1684" y="522" style="letter-spacing:.8px">Weapon 1H</text><use href="#ud" x="1902" y="514"/>
<text x="1545" y="540" style="letter-spacing:.55px">Material</text>
<rect class="dd" x="1679.500" y="529.500" width="232" height="14" rx="3"/><text class="s" x="1684" y="540" style="letter-spacing:.7px">Sharp</text><use href="#ud" x="1902" y="532"/>
<rect x="1543.500" y="549.500" width="369" height="36" rx="2" fill="#3b3b3d" stroke="#2c2c2e"/>
<path d="M1563 557 L1572.500 575 H1554.500Z" fill="#f4c41e" stroke="#c89a10" stroke-width=".8"/><path d="M1563 563 V569.500 M1563 571 V573" stroke="#7a5a10" stroke-width="1.400"/>
<text x="1580" y="565" textLength="302" lengthAdjust="spacing" style="font-size:10.500px;letter-spacing:0;fill:#9a9a9a">The left-hand copy of the one-handed weapon will be created</text>
<text x="1580" y="576" textLength="120" lengthAdjust="spacing" style="font-size:10.500px;letter-spacing:0;fill:#9a9a9a">automatically on export.</text>
<text x="1545" y="602" style="letter-spacing:.55px">Is Flippable</text><use href="#ck" x="1679" y="593"/>
<text x="1545" y="620" style="letter-spacing:.55px">Is Ranged Weapon</text><use href="#cb" x="1679" y="611"/>
<text x="1545" y="645" style="letter-spacing:.55px">Mass</text>
<rect x="1679" y="641" width="178" height="3" rx="1.500" fill="#2f2f31"/><circle cx="1746" cy="642" r="5" fill="#686868"/>
<rect class="fld" x="1864.500" y="634.500" width="48" height="14"/><text class="v" x="1865" y="645">4</text>
<text x="1545" y="663" style="letter-spacing:.55px">Melee Damage</text>
<rect x="1679" y="659" width="178" height="3" rx="1.500" fill="#2f2f31"/><circle cx="1703" cy="660" r="5" fill="#686868"/>
<rect class="fld" x="1864.500" y="652.500" width="48" height="14"/><text class="v" x="1865" y="663">2</text>
<text x="1545" y="688" style="letter-spacing:.55px">Min Angle</text>
<rect class="fld" x="1679.500" y="677.500" width="53" height="14"/><text class="v" x="1681" y="688">0</text>
<text x="1545" y="706" style="letter-spacing:.55px">Max Angle</text>
<rect class="fld" x="1679.500" y="695.500" width="53" height="14"/><text class="v" x="1681" y="706">30</text>
<text x="1545" y="731" style="letter-spacing:.55px">Trail Start Point</text>
<text x="1679" y="731">X</text><rect class="fld" x="1691.500" y="719.500" width="62" height="14"/><text class="v" x="1693" y="731" style="letter-spacing:.6px">-0.2</text>
<text x="1758" y="731">Y</text><rect class="fld" x="1769.500" y="719.500" width="64" height="14"/><text class="v" x="1772" y="731">0</text>
<text x="1545" y="749" style="letter-spacing:.55px">Trail End Point</text>
<text x="1679" y="749">X</text><rect class="fld" x="1691.500" y="737.500" width="62" height="14"/><text class="v" x="1693" y="749" style="letter-spacing:.6px">1.9</text>
<text x="1758" y="749">Y</text><rect class="fld" x="1769.500" y="737.500" width="64" height="14"/><text class="v" x="1772" y="749">0</text>
<rect x="1665.500" y="782.500" width="125" height="62" rx="3" fill="url(#gexp)" stroke="#2d2d2f"/>
<text x="1728" y="817" style="text-anchor:middle;letter-spacing:.7px">Export!</text>
<text class="n" x="1634" y="830">3</text>

<!-- material section -->
<path d="M1530 879.500 H1916" stroke="#2a2a2c"/>
<rect x="1549" y="889" width="24" height="24" fill="#fff"/>
<use href="#trr" x="1535" y="910"/>
<text x="1585" y="897" style="font-size:13px;letter-spacing:.3px">Sprites-Default</text>
<text class="d" x="1585" y="916" style="letter-spacing:.75px">Shader</text>
<rect x="1634.500" y="905.500" width="275" height="13" rx="3" fill="#454547" stroke="#373739"/>
<text class="s" x="1640" y="916" style="letter-spacing:.55px;fill:#7e7e7e">Sprites/Default</text>
<path d="M1899 911 H1904 L1901.500 914Z" fill="#888"/>
<use href="#help" x="1883" y="886"/><use href="#gear" x="1901" y="886"/>
<path d="M1530 923.500 H1916" stroke="#2a2a2c"/><path d="M1530 928.500 H1916" stroke="#505052"/>
<rect x="1607.500" y="940.500" width="227" height="21" rx="3" fill="url(#gb)" stroke="#2c2c2e"/>
<text x="1721" y="954" style="text-anchor:middle;font-size:13px;letter-spacing:.35px">Add Component</text>

<!-- status bar -->
<rect x="0" y="1013" width="1916" height="21" fill="#2b2b2b"/>
<circle cx="7" cy="1025" r="5.500" fill="#eee"/><path d="M7 1021 V1026 M7 1027.500 V1029.500" stroke="#444" stroke-width="1.500"/>
<text x="17" y="1030" textLength="537" lengthAdjust="spacing" style="fill:#b0b0b0">Item successfully exported to: 'E:\Unity Projects\AddonsProject\Export\My First Weapon.item'</text>
</svg>
</body></html>
